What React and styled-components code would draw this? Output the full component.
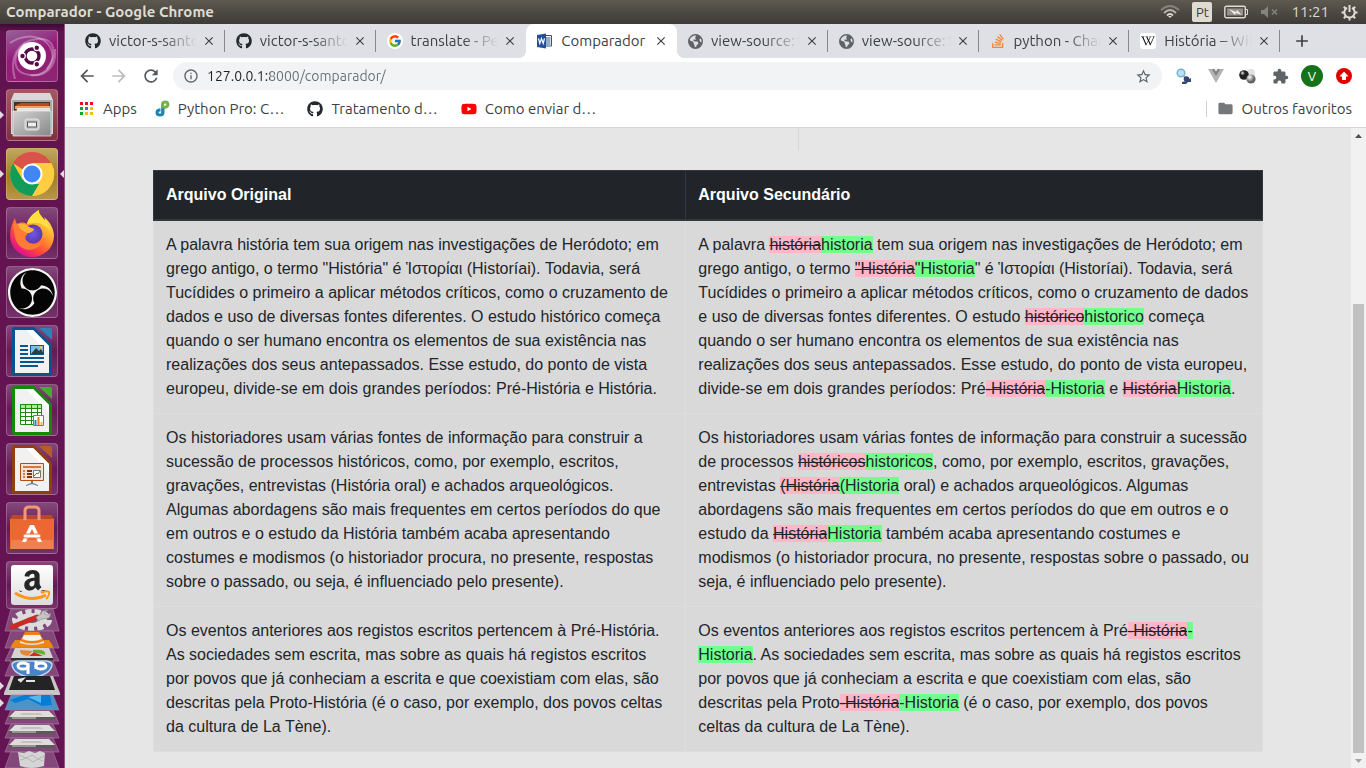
import React from "react";
import styled, { createGlobalStyle, css } from "styled-components";
import {
  MdArrowBack,
  MdArrowForward,
  MdRefresh,
  MdInfoOutline,
  MdStarBorder,
  MdExtension,
  MdFolder,
  MdClose,
  MdAdd,
} from "react-icons/md";
import {
  FaGithub,
  FaWikipediaW,
  FaStackOverflow,
  FaEarthAmericas,
  FaAmazon,
  FaYoutube,
} from "react-icons/fa6";
import { FcGoogle } from "react-icons/fc";
import { SiObsstudio } from "react-icons/si";

const uiFont = `"Ubuntu", "Noto Sans", "Open Sans", sans-serif`;

const GlobalStyle = createGlobalStyle`
  * { box-sizing: border-box; }
  body { margin: 0; font-family: ${uiFont}; font-size: 15px; color: #3c4043; }
  button { font: inherit; color: inherit; background: none; border: 0; padding: 0; margin: 0; }
  svg { display: block; flex: none; }
`;

const Desktop = styled.div`
  display: flex;
  flex-direction: column;
  height: 100vh;
  overflow: hidden;
`;

const Panel = styled.header`
  flex: none;
  display: flex;
  align-items: center;
  height: 24px;
  padding: 0 8px 0 6px;
  background: linear-gradient(#5d594f, #3d3b36);
  color: #dfdbd2;
`;

const WindowTitle = styled.h1`
  flex: 1;
  margin: 0;
  font-size: 15px;
  line-height: 24px;
  font-weight: 700;
`;

const Indicators = styled.div`
  display: flex;
  align-items: center;
  gap: 12px;
  line-height: 24px;
`;

const Keyboard = styled.span`
  width: 20px;
  height: 20px;
  border-radius: 2px;
  background: #dfdbd2;
  color: #3d3b36;
  font-size: 13px;
  line-height: 20px;
  text-align: center;
`;

const Workspace = styled.div`
  flex: 1;
  display: flex;
  min-height: 0;
`;

const Launcher = styled.nav`
  flex: none;
  display: flex;
  flex-direction: column;
  width: 65px;
  overflow: hidden;
  background: linear-gradient(#3d0a34, #61134f 8px, #651453);
  border-right: 1px solid #8d5580;
`;

const LauncherGroup = styled.div`
  display: flex;
  flex-direction: column;
  gap: 7px;
  padding: 6px 6px 0;
`;

const arrow = css`
  content: "";
  position: absolute;
  top: 50%;
  margin-top: -4px;
  border: 4px solid transparent;
`;

const Tile = styled.button`
  position: relative;
  flex: none;
  display: flex;
  align-items: center;
  justify-content: center;
  width: 52px;
  height: ${(p) => (p.$folded ? 48 : 52)}px;
  border-radius: 4px;
  border: 1px solid rgba(255, 255, 255, 0.22);
  background: ${(p) => p.$tint || "linear-gradient(#84487a, #661a56 50%, #75316a)"};
  ${(p) => p.$running && css`&::before { ${arrow} left: -7px; border-left-color: #e3dbe1; }`}
  ${(p) => p.$focused && css`&::after { ${arrow} right: -7px; border-right-color: #e3dbe1; }`}
`;

const Folded = styled.button`
  position: relative;
  flex: none;
  height: ${(p) => p.$height}px;
  svg { overflow: visible; }
  ${(p) => p.$running && css`&::before { ${arrow} left: 0; border-left-color: #e3dbe1; z-index: 1; }`}
`;

const Browser = styled.main`
  flex: 1;
  display: flex;
  flex-direction: column;
  min-width: 0;
  background: #fff;
`;

const TabStrip = styled.div`
  flex: none;
  display: flex;
  height: 34px;
  padding-left: 9px;
  background: #dee0e5;
`;

const TabList = styled.div`
  flex: 0 1 1206px;
  display: flex;
  min-width: 0;
`;

const Tab = styled.div`
  position: relative;
  display: flex;
  align-items: center;
  flex: 1 1 0;
  min-width: 0;
  padding: 0 7px 0 11px;
  border-right: 1px solid transparent;
  ${(p) => p.$separator && css`
    border-image: linear-gradient(transparent 7px, #85888d 7px, #85888d 27px, transparent 27px) 1;
    border-image-width: 0 1px 0 0;
  `}
  ${(p) => p.$active && css`
    background: #fff;
    border-radius: 8px 8px 0 0;
    &::before, &::after {
      content: "";
      position: absolute;
      bottom: 0;
      width: 8px;
      height: 8px;
    }
    &::before { left: -8px; background: radial-gradient(circle at 0 0, transparent 8px, #fff 8px); }
    &::after { right: -9px; background: radial-gradient(circle at 100% 0, transparent 8px, #fff 8px); }
  `}
`;

const TabTitle = styled.button`
  flex: 1;
  min-width: 0;
  margin: 0 4px 0 8px;
  overflow: hidden;
  white-space: nowrap;
  text-align: left;
  line-height: 34px;
  ${(p) => p.$fade && css`mask-image: linear-gradient(90deg, #000 60%, transparent);`}
`;

const IconButton = styled.button`
  flex: none;
  display: flex;
  align-items: center;
  justify-content: center;
  width: ${(p) => p.$size}px;
  height: ${(p) => p.$size}px;
  color: ${(p) => p.$color || "#54575b"};
`;

const NewTab = styled(IconButton)`
  align-self: center;
  margin-left: 8px;
`;

const WhiteDisc = styled.span`
  display: flex;
  align-items: center;
  justify-content: center;
  width: 16px;
  height: 16px;
  border-radius: ${(p) => (p.$square ? 3 : 8)}px;
  background: #fff;
`;

const Toolbar = styled.div`
  flex: none;
  display: flex;
  align-items: center;
  height: 36px;
  padding: 0 6px;
`;

const Omnibox = styled.div`
  flex: 1;
  display: flex;
  align-items: center;
  height: 28px;
  margin: 0 6px;
  padding: 0 10px;
  border-radius: 14px;
  background: #f1f3f4;
  color: #5f6368;
`;

const Address = styled.input`
  flex: 1;
  min-width: 0;
  height: 28px;
  margin-left: 8px;
  padding: 0;
  border: 0;
  outline: 0;
  font: inherit;
  font-size: 14px;
  color: transparent;
  caret-color: #202124;
  background: linear-gradient(90deg, #202124 63px, #6a6e72 63px);
  background-clip: text;
  -webkit-background-clip: text;
`;

const Avatar = styled.span`
  width: 22px;
  height: 22px;
  border-radius: 11px;
  background: #17731b;
  color: #fff;
  font-size: 13px;
  line-height: 22px;
  text-align: center;
`;

const Bookmarks = styled.div`
  flex: none;
  display: flex;
  align-items: center;
  gap: 18px;
  height: 34px;
  padding: 0 14px;
  padding-bottom: 4px;
  border-bottom: 1px solid #d5d6d8;
`;

const Bookmark = styled.a`
  display: flex;
  align-items: center;
  gap: 8px;
  white-space: nowrap;
  color: #3c4043;
  text-decoration: none;
  line-height: 20px;
`;

const PageBookmark = styled(Bookmark)`
  padding-right: 5px;
`;

const OtherBookmarks = styled(Bookmark)`
  height: 16px;
  margin-left: auto;
  padding-left: 10px;
  border-left: 1px solid #cfd1d4;
`;

const Viewport = styled.div`
  flex: 1;
  display: flex;
  min-height: 0;
  background: #e6e6e6;
`;

const Page = styled.div`
  flex: 1;
  min-width: 0;
  overflow: hidden;
  font-family: "Liberation Sans", Arial, sans-serif;
  font-size: 16px;
  line-height: 24px;
  color: #212529;
`;

const Container = styled.div`
  max-width: 1140px;
  margin: 0 auto;
  padding: 0 15px;
`;

const FormFoot = styled.div`
  display: grid;
  grid-template-columns: 18fr 13fr;
  height: 23px;
  margin-bottom: 19px;
`;

const FormDivider = styled.div`
  grid-column: 2;
  border-left: 1px solid #c8dcd8;
`;

const DiffTable = styled.table`
  width: 100%;
  border-collapse: collapse;
  background: #d9d9d9;
`;

const FirstColumn = styled.col`
  width: 48%;
`;

const HeadCell = styled.th`
  padding: 12px;
  border: 1px solid #32383e;
  border-bottom-width: 2px;
  background: #212529;
  color: #fff;
  text-align: left;
  vertical-align: bottom;
`;

const Cell = styled.td`
  padding: 12px;
  border: 1px solid #dddddd;
  vertical-align: top;
`;

const Removed = styled.del`
  background: #ffb6c6;
`;

const Added = styled.ins`
  background: #73ff8e;
  text-decoration: none;
`;

const Scrollbar = styled.div`
  flex: none;
  display: flex;
  flex-direction: column;
  align-items: center;
  width: 15px;
  background: #f1f1f1;
`;

const Track = styled.div`
  flex: 1;
  display: flex;
  flex-direction: column;
  justify-content: flex-end;
  width: 11px;
`;

const Thumb = styled.div`
  height: 73.6%;
  background: #c1c1c1;
`;

const glossy = "linear-gradient(#85487b, #651a55 60%, #75316a)";

const UbuntuLogo = () => (
  <svg width="50" height="50" viewBox="0 0 50 50">
    <g fill="none" stroke="#fff" strokeOpacity=".3" strokeWidth="2">
      <path d="M8 48C2 28 10 10 30 8s20 18 10 30" />
      <path d="M3 12C18 2 36 4 43 16s-2 30-20 28S4 26 18 12" />
      <path d="M24 44c14 2 26-8 24-26" />
    </g>
    <circle cx="25" cy="25" r="14" fill="#fff" />
    <circle cx="25" cy="25" r="7" fill="none" stroke="#560b48" strokeWidth="3.4" />
    <g fill="#560b48" stroke="#fff" strokeWidth="1.2">
      <circle cx="15.5" cy="25" r="2.8" />
      <circle cx="29.8" cy="16.8" r="2.8" />
      <circle cx="29.8" cy="33.2" r="2.8" />
    </g>
  </svg>
);

const FilesIcon = () => (
  <svg width="50" height="50" viewBox="0 0 50 50">
    <defs>
      <linearGradient id="drawer" x2="1" y2="1">
        <stop stopColor="#d2d2d2" />
        <stop offset="1" stopColor="#888" />
      </linearGradient>
    </defs>
    <path d="M7 3h36l3 7v34H4V10z" fill="#d8d8d8" />
    <path d="M5 10h40v33H5z" fill="#a9a9a9" />
    <path d="M7 12h36v10H7z" fill="#42332c" />
    <path d="M9 15l5-2h28v9H9z" fill="#bd4a1d" />
    <path d="M8 16h35v3H8z" fill="#f5a25a" />
    <path d="M10 18h33v3H10z" fill="#e9e5e1" />
    <path d="M6 21h38v25H6z" fill="url(#drawer)" stroke="#eee" strokeWidth=".7" />
    <rect x="18" y="29" width="14" height="11" rx="2" fill="#c6c6c6" stroke="#e5e5e5" />
    <rect x="20.5" y="32" width="9" height="5" fill="#eee" stroke="#555" />
  </svg>
);

const ChromeIcon = () => (
  <svg width="46" height="46" viewBox="0 0 46 46">
    <circle cx="23" cy="23" r="22" fill="#fc3" />
    <path d="M23 23 4 12A22 22 0 0 1 42 12z" fill="#d9534a" />
    <path d="M23 12h19.2A22 22 0 0 1 23 45l9.5-16.5z" fill="#ffcd41" />
    <path d="M4 12 13.5 28.5 23 33h7l-7 12A22 22 0 0 1 4 12z" fill="#119d58" />
    <path d="M4 12A22 22 0 0 1 42 12H23l-10 6z" fill="#d9534a" />
    <circle cx="23" cy="23" r="10.5" fill="#fff" />
    <circle cx="23" cy="23" r="8.5" fill="#4285f4" />
  </svg>
);

const FirefoxIcon = () => (
  <svg width="48" height="50" viewBox="0 0 48 50">
    <defs>
      <linearGradient id="fire" x1=".85" y1=".1" x2=".25" y2=".9">
        <stop stopColor="#fff44f" />
        <stop offset=".4" stopColor="#ff9a2b" />
        <stop offset=".75" stopColor="#ff4340" />
        <stop offset="1" stopColor="#e31587" />
      </linearGradient>
      <radialGradient id="globe">
        <stop stopColor="#7059e6" />
        <stop offset="1" stopColor="#5b38ad" />
      </radialGradient>
    </defs>
    <path d="M7 10c0 2 1 4 2 6 3-2 7-2 10 0 1-5 5-10 12-14-1 5 2 7 6 11 0-1 0-3-1-4 6 5 10 12 10 19a22 21 0 0 1-44 0C2 21 4 15 7 10z" fill="url(#fire)" />
    <path d="M31 2c-1 6 10 10 11 21-2-3-4-5-7-6-3-3-9-2-16-1 1-5 5-10 12-14z" fill="#ffdf3d" />
    <circle cx="25" cy="26" r="9.5" fill="url(#globe)" />
    <path d="M5 16c7-1 12 1 15 4l6 1c0 2-4 4-6 4-2 3-4 5-1 8 3 4 10 4 15 0-2 10-18 12-24 3-4-6-4-14-5-20z" fill="#ff7b36" />
    <path d="M10 16c5-1 8 0 11 3l5 2c0 2-4 4-7 4-4-2-8-4-9-9z" fill="#ffb43a" />
  </svg>
);

const Obs = styled.span`
  display: flex;
  border-radius: 50%;
  background: #050505;
  color: #f4f4f4;
`;

const OfficeIcon = ({ color, light, children }) => (
  <svg width="40" height="49" viewBox="0 0 40 49">
    <path d="M3 0h19l18 18v28q0 3-3 3H3q-3 0-3-3V3q0-3 3-3z" fill={color} />
    <path d="M27 1h11q2 0 2 2v10z" fill={light} />
    <path d="M3 3h18l16 16v27H3z" fill="#f1f1f1" />
    <path d="M21 3l16 16v8L14 3z" fill="#fff" />
    {children}
  </svg>
);

const WriterIcon = () => (
  <OfficeIcon color="#07558c" light="#2d82b7">
    <path d="M8 18h8v2H8zM8 22h8v2H8zM8 26h8v2H8zM8 30h24v2H8zM8 34h24v2H8zM8 38h18v2H8z" fill="#08588f" />
    <rect x="18.5" y="18.5" width="13" height="9" fill="#79bfe5" stroke="#08588f" />
    <path d="M19 27l5-6 3 3 2-2 3 5z" fill="#313c38" />
    <circle cx="29" cy="20.5" r="1.3" fill="#f8cc35" />
  </OfficeIcon>
);

const CalcIcon = () => (
  <OfficeIcon color="#158809" light="#42ad32">
    <path d="M8 18h22v21H8z" fill="#fff" />
    <path d="M8 18h22v4H8z" fill="#aee79a" />
    <path d="M8.5 18.5h21v20h-21zM8 22.5h22M8 26.5h22M8 30.5h22M8 34.5h22M13.5 18v21M19.5 18v21M25.5 18v21" fill="none" stroke="#168f07" />
    <path d="M21.5 29.5h10v10h-10z" fill="#fff" stroke="#777" />
    <path d="M22.5 34h2v5h-2z" fill="#2688b9" />
    <path d="M25.5 31h2v8h-2z" fill="#ee7625" />
    <path d="M28.5 36h2v3h-2z" fill="#edc726" />
  </OfficeIcon>
);

const ImpressIcon = () => (
  <OfficeIcon color="#90400c" light="#b85d22">
    <path d="M8.5 18.5h23v17h-23z" fill="#f9e2d3" stroke="#b34c0f" />
    <path d="M11 21h18v2H11z" fill="#d27945" />
    <path d="M11 25h2v2h-2zM11 28h2v2h-2zM11 31h2v2h-2z" fill="#dd7b41" />
    <path d="M15 25h5v2h-5zM15 28h5v2h-5zM15 31h5v2h-5z" fill="#7b3510" />
    <path d="M21.5 25.5h7v7h-7z" fill="#fff" stroke="#777" />
    <path d="M22 31l3-3 1 1 2-3" stroke="#299829" fill="none" />
    <path d="M19 36h2v2l5 2v1l-6-2-6 2v-1l5-2z" fill="#777" />
  </OfficeIcon>
);

const SoftwareIcon = () => (
  <svg width="44" height="46" viewBox="0 0 44 46">
    <path d="M3 10h38l3 4v30H0V14z" fill="#ec6833" />
    <path d="M1 35h42v9H1z" fill="#f08050" />
    <path d="M3 10h38l3 4H0z" fill="#b54a23" />
    <path d="M15 15V6q0-4 4-4h6q4 0 4 4v9" fill="none" stroke="#f19a72" strokeWidth="3" />
    <path d="M12 37l8-17h4l8 17h-4l-6-13-6 13z" fill="#fff" />
    <rect x="13" y="29" width="18" height="4" rx="2" fill="#fff" stroke="#ec6833" />
  </svg>
);

const AmazonPlate = styled.span`
  display: flex;
  align-items: center;
  justify-content: center;
  width: 42px;
  height: 40px;
  border-radius: 3px;
  background: linear-gradient(#fff, #dcdcdc);
`;

const AmazonIcon = () => (
  <AmazonPlate>
    <svg width="38" height="36" viewBox="0 0 38 36">
      <defs>
        <clipPath id="amazonLetter"><path d="M0 0h38v25H0z" /></clipPath>
      </defs>
      <g clipPath="url(#amazonLetter)">
        <FaAmazon x="4" y="1" size={31} color="#252525" />
      </g>
      <path d="M2 26q16 10 31 2" fill="none" stroke="#f7981d" strokeWidth="3" />
      <path d="M28 26q6-3 8-1 1 3-3 7" fill="none" stroke="#f7981d" strokeWidth="2" />
    </svg>
  </AmazonPlate>
);

const FoldedPane = ({ height, fill = "#83477a", children }) => (
  <svg width="64" height={height} viewBox={`0 0 64 ${height}`}>
    <path d={`M11 0h42l6 ${height}H5z`} fill={fill} stroke="#a578a0" strokeWidth=".7" />
    {children}
  </svg>
);

const SettingsIcon = () => (
  <FoldedPane height={22}>
    <ellipse cx="32" cy="11" rx="17" ry="8" fill="none" stroke="#dcdcdc" strokeWidth="6" strokeDasharray="6 3" />
    <ellipse cx="32" cy="11" rx="15" ry="7" fill="#dcdcdc" />
    <ellipse cx="32" cy="11" rx="6" ry="3" fill="#7c5275" />
    <path d="M12 18l25-10" stroke="#cb2b24" strokeWidth="5" strokeLinecap="round" />
    <path d="M36 8l5-3 1-3 6-1-4 3 3 2 4-2-2 5-7 1-4 2z" fill="#c4c4c4" stroke="#858585" strokeWidth=".6" />
  </FoldedPane>
);

const VlcIcon = () => (
  <FoldedPane height={17}>
    <path d="M15 9h34l4 6v2H11v-2z" fill="#ef8511" />
    <path d="M25 1h14l5 9q-12 5-24 0z" fill="#ee7f12" />
    <path d="M24 4h16l2 4q-10 4-20 0z" fill="#f5f1ed" />
    <path d="M20 10q12 5 24 0v2q-12 4-24 0z" fill="#e8e2db" />
  </FoldedPane>
);

const DiskUsageIcon = () => (
  <FoldedPane height={13}>
    <path d="M15 0h34l4 10H11z" fill="#d5d4d2" />
    <path d="M11 10h42v3H11z" fill="#303030" />
    <path d="M20 2l13 1-5 5q-9-1-8-6z" fill="#e38636" />
    <path d="M33 2q14-1 12 5l-12-3z" fill="#63b12e" />
    <path d="M29 8l5-4 9 4z" fill="#cc3224" />
  </FoldedPane>
);

const TorrentIcon = () => (
  <FoldedPane height={15}>
    <path d="M12 3a20 13 0 0 0 40 0q-2-3-6-3H18q-4 0-6 3z" fill="#4a83c9" stroke="#bdd6ef" strokeWidth="1.5" />
    <g fill="none" stroke="#fff" strokeWidth="3">
      <ellipse cx="23" cy="5" rx="5" ry="3" />
      <ellipse cx="41" cy="5" rx="5" ry="3" />
      <path d="M28 2v11M36 0v8" />
    </g>
  </FoldedPane>
);

const TerminalIcon = () => (
  <svg width="64" height="19" viewBox="0 0 64 19">
    <path d="M11 0h42l7 17v2H4v-2z" fill="#c8c6c5" />
    <path d="M14 0h36l5 14H9z" fill="#242424" />
    <path d="M18 4l5-1-3 3M26 5h9" fill="none" stroke="#e4e4e4" strokeWidth="2" />
  </svg>
);

const CodeIcon = () => (
  <FoldedPane height={15} fill="#4a94c8">
    <path d="M41 0h9l2 10-10 1-14-7-13 4-5-3 14-5z" fill="#087dd5" />
    <path d="M28 2l13-2v8z" fill="#5ab7ee" />
  </FoldedPane>
);

const DriveIcon = () => (
  <FoldedPane height={14}>
    <path d="M15 1h34l6 6H9z" fill="#dedddb" />
    <path d="M9 7h46v3H9z" fill="#5c5a57" />
    <path d="M22 3h18l3 2H20z" fill="#c4c2bf" />
    <path d="M12 8h24" stroke="#d0d0cd" />
  </FoldedPane>
);

const TrashIcon = () => (
  <FoldedPane height={16}>
    <path d="M18 0l6 1 5-2 6 2 5-2 5 2-1 13q-13 4-24 0z" fill="#d5d5d5" />
    <path d="M19 3l7 3 6-3 6 4 6-3M20 8l7-2 6 4 5-3 5 2" fill="none" stroke="#b5b5b5" />
  </FoldedPane>
);

const WordIcon = () => (
  <svg width="16" height="16" viewBox="0 0 16 16">
    <path d="M8 2.5h6.5v10.5H8z" fill="#fff" stroke="#2a5599" />
    <path d="M9 5h4.5M9 7h4.5M9 9h4.5M9 11h4.5" stroke="#2a5599" />
    <path d="M0 2l9-1.5v15L0 14z" fill="#234f9d" />
    <path d="M1.5 5.5l1.3 5 1.7-5 1.7 5 1.3-5" fill="none" stroke="#fff" strokeWidth="1.2" />
  </svg>
);

const SearchPersonIcon = () => (
  <svg width="16" height="16" viewBox="0 0 16 16">
    <path d="M7 7l3 4" stroke="#c39a3c" strokeWidth="1.5" />
    <circle cx="5" cy="5" r="3.8" fill="#b9e2f7" stroke="#79b1d8" strokeWidth="1.5" />
    <circle cx="10.5" cy="11" r="2.8" fill="#34457a" />
    <path d="M6 14l4-1 5-3v4h-3l-2 2H6z" fill="#34457a" />
  </svg>
);

const VueIcon = () => (
  <svg width="16" height="14" viewBox="0 0 16 14">
    <path d="M0 0h3.5L8 7.8 12.5 0H16L8 14z" fill="#b4b4b4" />
    <path d="M3.5 0h3L8 2.6 9.5 0h3L8 7.8z" fill="#828282" />
  </svg>
);

const SpheresIcon = () => (
  <svg width="18" height="16" viewBox="0 0 18 16">
    <defs>
      <radialGradient id="darkBall" cx=".35" cy=".3"><stop stopColor="#eee" /><stop offset=".5" stopColor="#222" /></radialGradient>
      <radialGradient id="greyBall" cx=".35" cy=".3"><stop stopColor="#fff" /><stop offset="1" stopColor="#666" /></radialGradient>
    </defs>
    <circle cx="12" cy="5" r="4" fill="#e2e2e2" />
    <circle cx="5" cy="7" r="4.8" fill="url(#darkBall)" />
    <circle cx="12" cy="11" r="4.6" fill="url(#greyBall)" />
  </svg>
);

const UpdateIcon = () => (
  <svg width="16" height="16" viewBox="0 0 16 16">
    <circle cx="8" cy="8" r="8" fill="#e10000" />
    <path d="M8 3.5l4.5 5H10V12H6V8.500H3.500z" fill="#fff" />
  </svg>
);

const AppsIcon = () => {
  const colors = ["#f00a1e", "#f00a1e", "#f00a1e", "#0f9d45", "#4365f3", "#f6bd10", "#0f9d45", "#f6bd10", "#f6bd10"];
  return (
    <svg width="16" height="15" viewBox="0 0 16 15">
      {colors.map((fill, i) => (
        <rect key={i} x={1 + (i % 3) * 5} y={1 + Math.floor(i / 3) * 5} width="3" height="3" fill={fill} />
      ))}
    </svg>
  );
};

const PythonProIcon = () => (
  <svg width="15" height="17" viewBox="0 0 15 17">
    <path d="M7.500 13V4.500q0-2.500 2.700-2.500t2.700 2.500q0 2.500-3.900 3" fill="none" stroke="#71b34b" strokeWidth="3" />
    <path d="M8 8.500v3.700q0 2.800-3 2.800t-3-2.500q0-2.300 3.500-2.700" fill="none" stroke="#1885b5" strokeWidth="3" />
  </svg>
);

const WifiIcon = () => (
  <svg width="20" height="16" viewBox="0 0 20 16" fill="none" strokeWidth="1.8">
    <path d="M1 6q9-8 18 0" stroke="#85827a" />
    <path d="M4 9q6-6 12 0" stroke="#b8b4aa" />
    <path d="M7 11.5q3-3 6 0" stroke="#dfdbd2" />
    <path d="M8 12l2 2 2-2z" fill="#dfdbd2" />
  </svg>
);

const BatteryIcon = () => (
  <svg width="24" height="14" viewBox="0 0 24 14">
    <rect x=".8" y="1.2" width="20.5" height="11.5" rx="1.5" fill="none" stroke="#dfdbd2" strokeWidth="1.4" />
    <path d="M22 4.5h1.5v5H22" fill="none" stroke="#dfdbd2" />
    <path d="M3 3.5h16v7H3z" fill="#94918a" />
    <path d="M5 4l7 3 1-2 5 5-6-2-1 2z" fill="#efebe3" />
  </svg>
);

const MutedIcon = () => (
  <svg width="19" height="14" viewBox="0 0 19 14">
    <path d="M1 5h3l4-4v12l-4-4H1z" fill="#87847c" />
    <path d="M12 4.5l5 5m0-5l-5 5" stroke="#87847c" strokeWidth="1.4" />
  </svg>
);

const SessionIcon = () => (
  <svg width="17" height="17" viewBox="0 0 17 17" fill="none" stroke="#dfdbd2">
    <path d="M6 3.8a5.2 5.2 0 1 0 5 0" strokeWidth="2" />
    <path d="M8.5 1v7" strokeWidth="2" />
    <path d="M.5 8.5H3M14 8.5h2.5M2.8 2.800l2 2M14.200 2.800l-2 2M2.800 14.200l2-2M14.200 14.200l-2-2M8.500 14v2.500" strokeWidth="2" />
  </svg>
);

const ScrollArrow = ({ down }) => (
  <svg width="15" height="15" viewBox="0 0 15 15">
    <path d={down ? "M4 6h7l-3.5 4z" : "M4 10h7L7.500 6z"} fill={down ? "#a3a3a3" : "#505050"} />
  </svg>
);

const Globe = () => <FaEarthAmericas size={15} color="#5f6368" />;
const Octocat = () => <FaGithub size={16} color="#24292e" />;

const tabs = [
  { title: "victor-s-santos", icon: <Octocat />, separator: true },
  { title: "victor-s-santos", icon: <Octocat />, separator: true },
  { title: "translate - Pesquisa", icon: <WhiteDisc><FcGoogle size={14} /></WhiteDisc> },
  { title: "Comparador", icon: <WordIcon />, active: true },
  { title: "view-source:127", icon: <Globe />, separator: true },
  { title: "view-source:127", icon: <Globe />, separator: true },
  { title: "python - Change", icon: <FaStackOverflow size={16} color="#f0853a" />, separator: true },
  { title: "História – Wikipédia", icon: <WhiteDisc $square><FaWikipediaW size={14} color="#111" /></WhiteDisc>, separator: true },
];

const launcherItems = [
  { name: "Pesquisar", icon: <UbuntuLogo />, tint: "linear-gradient(160deg, #95629a, #951a78 45%, #8e2673)" },
  { name: "Arquivos", icon: <FilesIcon />, tint: "linear-gradient(#a35864, #80313f)", running: true },
  { name: "Google Chrome", icon: <ChromeIcon />, tint: "linear-gradient(#c0a75f, #a17d25 55%, #b89647)", running: true, focused: true },
  { name: "Firefox", icon: <FirefoxIcon />, tint: glossy },
  { name: "OBS Studio", icon: <Obs><SiObsstudio size={49} /></Obs> },
  { name: "LibreOffice Writer", icon: <WriterIcon /> },
  { name: "LibreOffice Calc", icon: <CalcIcon /> },
  { name: "LibreOffice Impress", icon: <ImpressIcon /> },
  { name: "Ubuntu Software", icon: <SoftwareIcon /> },
  { name: "Amazon", icon: <AmazonIcon />, folded: true },
];

const foldedItems = [
  { name: "Configurações", icon: <SettingsIcon />, height: 22 },
  { name: "VLC", icon: <VlcIcon />, height: 17 },
  { name: "Uso de disco", icon: <DiskUsageIcon />, height: 13 },
  { name: "qBittorrent", icon: <TorrentIcon />, height: 15 },
  { name: "Terminal", icon: <TerminalIcon />, height: 19, running: true },
  { name: "Visual Studio Code", icon: <CodeIcon />, height: 15, running: true },
  { name: "Disco 1", icon: <DriveIcon />, height: 14 },
  { name: "Disco 2", icon: <DriveIcon />, height: 14 },
  { name: "Disco 3", icon: <DriveIcon />, height: 14 },
  { name: "Lixeira", icon: <TrashIcon />, height: 16 },
];

/* Secondary texts mark a replaced word as [removed|added]. */
const rows = [
  {
    original:
      'A palavra história tem sua origem nas investigações de Heródoto; em grego antigo, o termo "História" é Ἱστορίαι (Historíai). Todavia, será Tucídides o primeiro a aplicar métodos críticos, como o cruzamento de dados e uso de diversas fontes diferentes. O estudo histórico começa quando o ser humano encontra os elementos de sua existência nas realizações dos seus antepassados. Esse estudo, do ponto de vista europeu, divide-se em dois grandes períodos: Pré-História e História.',
    secondary:
      'A palavra [história|historia] tem sua origem nas investigações de Heródoto; em grego antigo, o termo ["História|"Historia]" é Ἱστορίαι (Historíai). Todavia, será Tucídides o primeiro a aplicar métodos críticos, como o cruzamento de dados e uso de diversas fontes diferentes. O estudo [histórico|historico] começa quando o ser humano encontra os elementos de sua existência nas realizações dos seus antepassados. Esse estudo, do ponto de vista europeu, divide-se em dois grandes períodos: Pré[-História|-Historia] e [História|Historia].',
  },
  {
    original:
      "Os historiadores usam várias fontes de informação para construir a sucessão de processos históricos, como, por exemplo, escritos, gravações, entrevistas (História oral) e achados arqueológicos. Algumas abordagens são mais frequentes em certos períodos do que em outros e o estudo da História também acaba apresentando costumes e modismos (o historiador procura, no presente, respostas sobre o passado, ou seja, é influenciado pelo presente).",
    secondary:
      "Os historiadores usam várias fontes de informação para construir a sucessão de processos [históricos|historicos], como, por exemplo, escritos, gravações, entrevistas [(História|(Historia] oral) e achados arqueológicos. Algumas abordagens são mais frequentes em certos períodos do que em outros e o estudo da [História|Historia] também acaba apresentando costumes e modismos (o historiador procura, no presente, respostas sobre o passado, ou seja, é influenciado pelo presente).",
  },
  {
    original:
      "Os eventos anteriores aos registos escritos pertencem à Pré-História. As sociedades sem escrita, mas sobre as quais há registos escritos por povos que já conheciam a escrita e que coexistiam com elas, são descritas pela Proto-História (é o caso, por exemplo, dos povos celtas da cultura de La Tène).",
    secondary:
      "Os eventos anteriores aos registos escritos pertencem à Pré[-História|-Historia]. As sociedades sem escrita, mas sobre as quais há registos escritos por povos que já conheciam a escrita e que coexistiam com elas, são descritas pela Proto[-História|-Historia] (é o caso, por exemplo, dos povos celtas da cultura de La Tène).",
  },
];

const DiffText = ({ text }) =>
  text.split(/(\[[^\]]*\])/).map((part, i) => {
    if (!part.startsWith("[")) return part;
    const [removed, added] = part.slice(1, -1).split("|");
    return (
      <React.Fragment key={i}>
        <Removed>{removed}</Removed>
        <Added>{added}</Added>
      </React.Fragment>
    );
  });

export default function App() {
  return (
    <Desktop>
      <GlobalStyle />
      <Panel>
        <WindowTitle>Comparador - Google Chrome</WindowTitle>
        <Indicators>
          <WifiIcon />
          <Keyboard>Pt</Keyboard>
          <BatteryIcon />
          <MutedIcon />
          <time>11:21</time>
          <SessionIcon />
        </Indicators>
      </Panel>
      <Workspace>
        <Launcher>
          <LauncherGroup>
            {launcherItems.map((item) => (
              <Tile key={item.name} aria-label={item.name} $tint={item.tint} $running={item.running} $focused={item.focused} $folded={item.folded}>
                {item.icon}
              </Tile>
            ))}
          </LauncherGroup>
          {foldedItems.map((item) => (
            <Folded key={item.name} aria-label={item.name} $height={item.height} $running={item.running}>
              {item.icon}
            </Folded>
          ))}
        </Launcher>
        <Browser>
          <TabStrip>
            <TabList>
              {tabs.map((tab, i) => (
                <Tab key={i} $active={tab.active} $separator={tab.separator}>
                  {tab.icon}
                  <TabTitle $fade={!tab.active}>{tab.title}</TabTitle>
                  <IconButton $size={16} $color="#3c4043" aria-label="Fechar guia">
                    <MdClose size={14} />
                  </IconButton>
                </Tab>
              ))}
            </TabList>
            <NewTab $size={28} $color="#3c4043" aria-label="Nova guia">
              <MdAdd size={20} />
            </NewTab>
          </TabStrip>
          <Toolbar>
            <IconButton $size={32} aria-label="Voltar"><MdArrowBack size={20} /></IconButton>
            <IconButton $size={32} $color="#babcbe" aria-label="Avançar"><MdArrowForward size={20} /></IconButton>
            <IconButton $size={32} aria-label="Recarregar"><MdRefresh size={20} /></IconButton>
            <Omnibox>
              <MdInfoOutline size={16} />
              <Address aria-label="Endereço" defaultValue="127.0.0.1:8000/comparador/" />
              <MdStarBorder size={17} />
            </Omnibox>
            <IconButton $size={32} aria-label="Pesquisa"><SearchPersonIcon /></IconButton>
            <IconButton $size={32} aria-label="Vue.js"><VueIcon /></IconButton>
            <IconButton $size={32} aria-label="Esferas"><SpheresIcon /></IconButton>
            <IconButton $size={32} $color="#5f6368" aria-label="Extensões"><MdExtension size={17} /></IconButton>
            <IconButton $size={32} aria-label="Perfil"><Avatar>V</Avatar></IconButton>
            <IconButton $size={32} aria-label="Atualizar"><UpdateIcon /></IconButton>
          </Toolbar>
          <Bookmarks>
            <Bookmark href="#apps"><AppsIcon />Apps</Bookmark>
            <PageBookmark href="#python"><PythonProIcon />Python Pro: C…</PageBookmark>
            <PageBookmark href="#tratamento"><Octocat />Tratamento d…</PageBookmark>
            <PageBookmark href="#como"><FaYoutube size={16} color="#f00" />Como enviar d…</PageBookmark>
            <OtherBookmarks href="#outros"><MdFolder size={17} color="#75777b" />Outros favoritos</OtherBookmarks>
          </Bookmarks>
          <Viewport>
            <Page>
              <Container>
                <FormFoot><FormDivider /></FormFoot>
                <DiffTable>
                  <colgroup><FirstColumn /><col /></colgroup>
                  <thead>
                    <tr>
                      <HeadCell scope="col">Arquivo Original</HeadCell>
                      <HeadCell scope="col">Arquivo Secundário</HeadCell>
                    </tr>
                  </thead>
                  <tbody>
                    {rows.map((row, i) => (
                      <tr key={i}>
                        <Cell>{row.original}</Cell>
                        <Cell><DiffText text={row.secondary} /></Cell>
                      </tr>
                    ))}
                  </tbody>
                </DiffTable>
              </Container>
            </Page>
            <Scrollbar>
              <ScrollArrow />
              <Track><Thumb /></Track>
              <ScrollArrow down />
            </Scrollbar>
          </Viewport>
        </Browser>
      </Workspace>
    </Desktop>
  );
}
